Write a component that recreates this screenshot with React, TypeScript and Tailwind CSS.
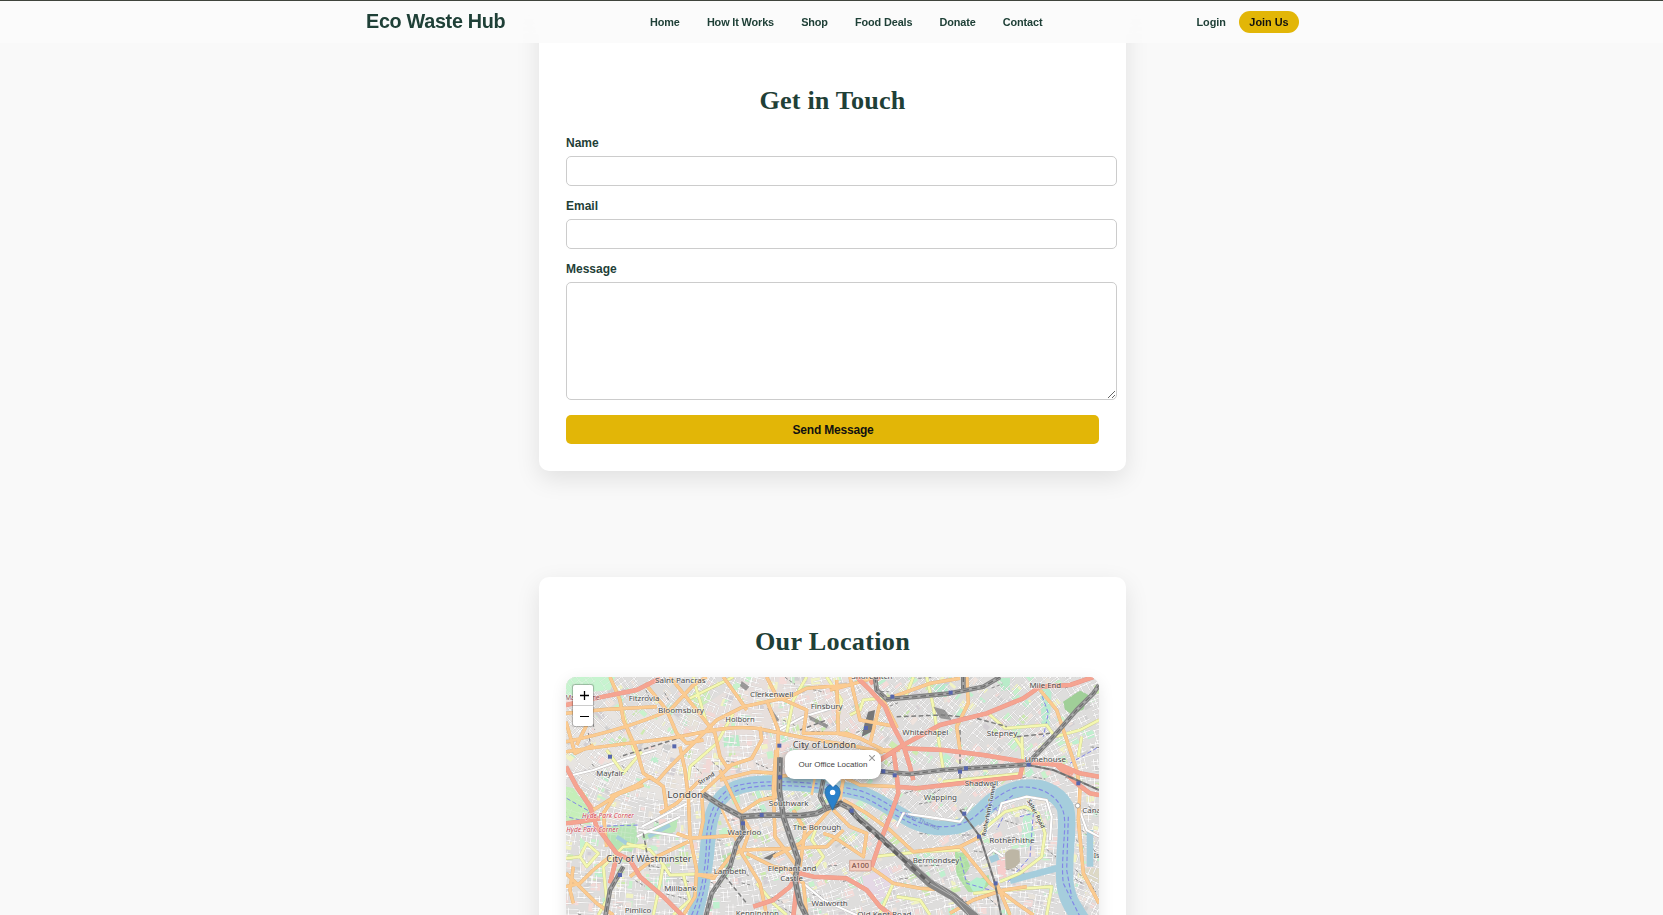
import React from "react";

const NAV = ["Home", "How It Works", "Shop", "Food Deals", "Donate", "Contact"];

function makeRandom(seed: number) {
  let s = seed;
  return () => {
    s = (s * 1664525 + 1013904223) % 4294967296;
    return s / 4294967296;
  };
}

const PATCH_COLORS = ["#c8f2cc", "#f2d9d6", "#e9e3da", "#cdebb0", "#f5dcd9", "#f1f3c4", "#d3cfd3", "#d0d0d0", "#efe3dd", "#bff0cf"];

function buildStreets() {
  const rnd = makeRandom(77);
  const patches: { d: string; fill: string }[] = [];
  let streets = "";
  let paths = "";
  for (let y = 0; y < 760; y += 44) {
    for (let x = 0; x < 1640; x += 44) {
      const a = Math.sin(x / 310 + 1.2) * 0.5 + Math.cos(y / 210 + x / 500) * 0.45;
      const cx = x + rnd() * 20;
      const cy = y + rnd() * 20;
      const c = Math.cos(a);
      const s = Math.sin(a);
      const p = (u: number, v: number) => `${(cx + u * c - v * s).toFixed(0)} ${(cy + u * s + v * c).toFixed(0)}`;
      for (let k = 0; k < 3; k++) {
        if (rnd() < 0.6) {
          const w = 7 + rnd() * 22;
          const h = 7 + rnd() * 20;
          const ox = rnd() * 34;
          const oy = rnd() * 34;
          patches.push({
            d: `M${p(ox, oy)}L${p(ox + w, oy)}L${p(ox + w, oy + h)}L${p(ox, oy + h)}Z`,
            fill: PATCH_COLORS[Math.floor(rnd() * PATCH_COLORS.length)],
          });
        }
      }
      for (let k = 0; k < 3; k++) {
        const o = k * 15 + rnd() * 6;
        if (k !== 1 || rnd() < 0.7) streets += `M${p(-4, o)}L${p(20 + rnd() * 28, o)}`;
        if (k < 2 || rnd() < 0.3) streets += `M${p(o, -3)}L${p(o, 16 + rnd() * 28)}`;
      }
      if (rnd() < 0.16) paths += `M${p(0, 8)}L${p(30, 14 + rnd() * 20)}`;
    }
  }
  return { patches, streets, paths };
}

const BASE = buildStreets();

const PARKS: [string, string][] = [
  ["M18 21H165L150 60L90 66L18 90Z", "#c6f3cf"],
  ["M18 350L40 355L95 430L60 455L18 465Z", "#c0efb8"],
  ["M18 350L60 400L85 462L18 462Z", "#cdf0b8"],
  ["M140 470L225 460L235 510L215 545L160 540L125 500Z", "#b6e3b5"],
  ["M240 490L355 440L345 485L250 510Z", "#b9e6b8"],
  ["M480 560L515 545L520 580L490 600Z", "#b9dfae"],
  ["M285 625L305 615L308 650L278 660Z", "#bff0cf"],
  ["M1510 95L1560 62L1585 75L1570 118L1535 135L1515 118Z", "#a0cf98"],
  ["M1185 545L1215 550L1230 590L1210 620L1235 640L1285 615L1290 640L1260 670L1225 665L1190 615Z", "#aedfa3"],
  ["M1390 435L1415 440L1425 500L1400 540L1385 500Z", "#c0efd2"],
  ["M1120 45L1165 42L1160 82L1122 80Z", "#b7eccd"],
  ["M385 70L445 62L455 90L405 120Z", "#cdeebb"],
  ["M490 198L535 195L540 228L492 232Z", "#b8ecc9"],
  ["M1440 40L1475 60L1468 175L1445 165Z", "#b9ecd0"],
  ["M1570 595L1617 595V640H1575Z", "#ddd9c5"],
  ["M375 135L410 130L415 165L385 172Z", "#e8e4da"],
  ["M905 620L990 590L1010 640L960 700L915 660Z", "#e5d9e6"],
  ["M1310 565L1335 560L1340 620L1315 630Z", "#f7cdcc"],
  ["M1320 25L1350 23L1350 60L1322 62Z", "#b8ecc9"],
];

const YELLOW = [
  "M180 90L200 170L225 250", "M140 240L190 310L245 245", "M385 330L390 290L470 220L520 130", "M200 520L270 540L310 585L330 615L410 612",
  "M18 565L60 560L80 520L115 550L80 590L60 560", "M115 735L140 690L130 590L190 530L260 525", "M280 735L300 640L310 580",
  "M380 90L440 60L520 21", "M440 160L410 60L400 21", "M680 190L700 90L740 21", "M800 21L845 90L830 160", "M1100 21L1120 110L1150 300",
  "M1285 130L1335 175L1460 165L1485 200L1560 180L1617 150", "M1385 200L1390 310L1150 335", "M1360 195L1390 240",
  "M1250 510L1280 470L1335 425L1395 410L1435 430L1455 490L1445 560L1380 610L1320 635", "M940 560L1080 545L1200 540",
  "M1000 640L960 730", "M1010 680L1080 690L1110 735", "M1240 670L1400 655L1475 650L1460 735", "M760 600L790 560L755 510L770 470",
  "M1060 21L1035 85", "M340 735L390 690L370 615", "M870 135L900 120L910 90L1000 80", "M590 640L640 700L680 735", "M1565 200L1555 260",
];

const ORANGE = [
  "M18 245C150 225 250 215 330 205C420 190 500 165 590 175C670 190 730 205 800 215C880 225 920 235 970 248",
  "M18 215C140 190 240 160 330 120L400 45L440 21", "M18 130L140 118L290 110", "M150 21L180 90L190 150L230 240L250 310L290 335L330 290L390 230L470 150L550 110L690 80L740 55L860 45",
  "M18 155L45 250L100 225", "M60 90L80 165L50 225", "M255 40L320 120L350 190L380 220L430 210", "M330 21L410 120L465 190L480 260L500 290L575 265L605 210L600 170",
  "M490 21L540 90L560 120", "M620 90L655 180L650 310L655 350", "M620 21L650 80L740 120L730 190L860 190L900 205",
  "M360 230L375 300L385 380L390 500L410 600L405 680L370 735", "M150 380L230 345L270 320L310 350L320 420",
  "M420 500L430 450L425 370L520 280", "M480 300L545 435L570 480L545 550L600 640L620 735", "M350 490L390 505L540 495",
  "M210 620L290 560L385 515", "M18 610L110 700L160 735", "M60 360L100 420L180 370L250 345", "M140 530L130 430L160 385",
  "M405 612L460 625L510 560L545 540L690 535L800 530L850 480", "M560 550L640 590L700 600", "M540 430L600 390L650 380",
  "M648 240L640 350L645 500L690 560L715 595", "M850 330L840 380L800 430L720 520L640 560", "M720 590L735 480L700 420",
  "M850 390L920 430L990 480L1060 545L1200 530L1260 500", "M820 420L870 470L920 490L910 560L820 500L790 490",
  "M930 590L1000 640L1080 655L1160 660", "M1200 530L1250 590L1290 640L1370 700L1420 735", "M1170 730L1240 690L1330 660L1400 650",
  "M1310 640L1350 735", "M690 600L730 640L740 735", "M1440 60L1490 120L1530 240L1550 300L1560 360L1555 450L1570 610L1617 700",
  "M810 60L850 50L950 21", "M970 90L1010 170L900 150L870 21", "M960 100L930 220L990 250", "M830 190L900 205L970 240L1020 240",
  "M1000 80L1110 40L1200 25", "M1220 21L1225 100L1190 170L1200 240", "M640 320L760 310L850 320L900 345L1010 350", "M480 330L580 305L650 310",
  "M18 650L60 640L100 600L150 560", "M40 700L30 660L40 590", "M420 330L350 400L300 430", "M830 30L835 190",
];

const RED = [
  "M18 105L130 80L230 60L300 25", "M18 290L50 350L90 410L110 470L170 550L210 570L240 620L310 680L370 740",
  "M18 460L60 455L120 445", "M170 560L150 640", "M890 21L930 60L975 110L1000 170L1030 225L1050 290L1060 330",
  "M960 270L1030 225L1140 165L1280 130L1390 85L1440 50L1530 45L1600 21", "M1030 235L1150 240L1270 255L1390 275L1500 285L1560 310L1617 320",
  "M1000 240L1010 310L1015 370L990 440L955 530L935 590", "M1010 350L1070 355L1200 340L1380 320L1390 275",
  "M720 610L760 620L860 625L920 660L960 710L1000 740", "M720 600L690 650L640 690L580 710", "M715 605L700 740", "M930 40L960 21",
  "M1490 285L1550 340L1590 370L1617 375", "M1500 285L1540 310",
];

const RAIL = [
  "M430 372L480 405L545 440L620 435L720 437L770 430L800 415L840 400L870 415L890 440L960 500L1040 575L1110 640L1180 680L1250 745",
  "M545 440L550 490L530 520L510 590L455 670L435 750", "M660 262L658 360L670 440L690 500L715 570L705 630L720 700L745 750",
  "M958 304L1050 312L1150 300L1260 293L1400 284", "M1400 284L1480 300L1550 330L1617 360",
  "M945 21L950 60L980 88L1070 80L1170 70L1210 62L1210 21", "M1210 62L1270 50L1320 21", "M1400 284L1480 200L1550 120L1600 70L1617 45",
  "M790 330L780 380L800 420", "M190 590L150 660L135 745", "M1200 420L1260 500L1305 640L1325 745",
];

const LANES =
  "M1250 510L1310 450L1325 400L1400 380L1460 390L1475 440L1470 510M1010 470L1030 430L1100 440L1200 455L1240 400M230 500L360 440M235 480L380 502M245 470L400 390M1265 570L1300 540L1330 560M655 180L730 140L830 110M730 640L790 690L900 740M1555 410L1580 480L1617 500M18 320L100 300L200 265L290 240";

const BRIDGES = "M545 550L480 405M385 502L470 502M648 300V380M765 320L755 375M850 320L842 390M1012 370L985 450M410 612L460 615";

const STATIONS = [
  [343, 229], [150, 260], [658, 227], [660, 322], [605, 435], [549, 460], [997, 80], [1172, 68], [1004, 316], [1200, 305],
  [1218, 295], [1406, 284], [1555, 340], [1213, 431], [1257, 500], [1307, 640], [875, 422], [180, 615], [918, 174], [970, 304],
];

const LABELS: [string, number, number, number, number][] = [
  ["Saint Pancras", 361, 38, 152, 23], ["Fitzrovia", 252, 93, 92, 23], ["Bloomsbury", 363, 129, 138, 23], ["Clerkenwell", 635, 80, 130, 23],
  ["Holborn", 540, 157, 88, 23], ["Finsbury", 800, 116, 96, 23], ["City of London", 793, 233, 190, 27], ["Mayfair", 150, 317, 82, 23],
  ["London", 376, 385, 108, 29], ["Southwark", 686, 408, 119, 23], ["Waterloo", 553, 495, 101, 23], ["The Borough", 771, 481, 145, 23],
  ["City of Westminster", 267, 575, 256, 27], ["Lambeth", 510, 613, 98, 23], ["Elephant and", 696, 602, 146, 23], ["Castle", 695, 633, 68, 23],
  ["Millbank", 361, 662, 96, 23], ["Pimlico", 234, 728, 80, 23], ["Kennington", 592, 738, 130, 23], ["Walworth", 809, 708, 109, 23],
  ["Whitechapel", 1096, 196, 138, 23], ["Stepney", 1326, 197, 92, 23], ["Mile End", 1456, 54, 95, 23], ["Limehouse", 1456, 275, 124, 23],
  ["Shadwell", 1264, 348, 100, 23], ["Wapping", 1141, 390, 100, 23], ["Rotherhithe", 1356, 518, 136, 23], ["Bermondsey", 1128, 580, 140, 23],
  ["Old Kent Road", 973, 740, 162, 23], ["Shoreditch", 936, 26, 124, 23], ["Canary", 1606, 430, 78, 23], ["Isle", 1618, 563, 34, 23],
];

function LondonMap() {
  return (
    <svg className="block h-full w-full" viewBox="18 21 1599 720" preserveAspectRatio="xMinYMin slice" fill="none" strokeLinejoin="round">
      <rect x="0" y="0" width="1640" height="760" fill="#dedddc" />
      <path d="M560 21H960V320H500L440 380L340 400L290 200Z" fill="#ebe0dc" opacity=".65" />
      <path d="M18 120H330L430 260L370 400L100 360L18 280Z" fill="#eceae4" opacity=".6" />
      {BASE.patches.map((p, i) => (
        <path key={i} d={p.d} fill={p.fill} />
      ))}
      {PARKS.map(([d, f]) => (
        <path key={d} d={d} fill={f} />
      ))}
      <path d={BASE.streets} stroke="#c6c3c3" strokeWidth="4.4" opacity=".8" />
      <path d={BASE.streets} stroke="#ffffff" strokeWidth="3" opacity=".9" />
      <path d={BASE.paths} stroke="#8d8d8d" strokeWidth="3" strokeDasharray="10 6" />
      <path d="M1510 95L1560 62L1585 75L1570 118L1535 135L1515 118Z" fill="#a0cf98" />
      <path d="M140 470L225 460L235 510L215 545L160 540L125 500Z" fill="#b6e3b5" opacity=".8" />
      <path d="M240 490L355 440L345 485L250 510Z" fill="#b9e6b8" />
      <path d="M18 350L40 355L95 430L60 455L18 465Z" fill="#c4efb9" opacity=".85" />
      <path d="M18 21H165L150 60L90 66L18 90Z" fill="#c6f3cf" opacity=".7" />
      <path d="M1185 545L1215 550L1230 590L1210 620L1235 640L1285 615L1290 640L1260 670L1225 665L1190 615Z" fill="#aedfa3" opacity=".85" />
      <path d="M1225 640L1250 622L1280 630L1270 660L1240 665Z" fill="#b4efcf" />
      <path d="M1335 550Q1350 530 1378 542L1380 575Q1365 600 1337 598Z" fill="#bdb6a5" />
      <path d="M60 500L80 520L60 540Z" fill="#c8f2cc" />
      <g stroke="#a5cddc">
        <path strokeWidth="44" d="M402 750C425 670 438 600 445 500C450 430 470 385 510 362C560 335 620 336 700 340C760 345 830 350 900 368C960 388 1000 425 1060 455C1120 482 1200 484 1250 440C1290 400 1320 372 1370 356" />
        <path strokeWidth="52" d="M1240 450C1290 395 1320 372 1375 358C1440 345 1490 365 1515 410C1530 460 1508 560 1515 640C1520 690 1545 720 1570 760" />
        <path strokeWidth="20" d="M1350 632L1490 595M1290 570L1315 560M1590 480V590" />
        <path strokeWidth="12" d="M170 500L215 530M265 500L330 465" />
      </g>
      <g stroke="#8287e6" strokeWidth="3.5" strokeDasharray="13 7">
        <path d="M395 735C425 670 438 600 440 500C445 430 470 375 520 350C570 335 620 335 700 336C760 340 830 345 900 362C960 382 1000 415 1060 450C1120 478 1200 480 1250 435C1290 400 1320 367 1370 352C1440 345 1490 375 1508 420C1525 460 1500 560 1510 640L1560 740" />
        <path d="M410 735C432 670 443 620 450 510C455 440 480 385 530 362C580 345 650 345 700 348C780 350 860 370 910 382C960 402 1010 445 1080 470M1300 420L1360 375M1525 440L1520 600L1535 680" />
        <path d="M20 385L90 425L60 450L20 440M80 470L240 465M1380 440L1420 430L1410 560L1340 640M1440 60L1465 130L1450 200M1530 280L1617 230M1200 560L1220 640L1290 660M1290 400L1330 440L1310 480" strokeWidth="3" />
      </g>
      <path d={LANES} stroke="#b9b6b6" strokeWidth="9" />
      <path d={LANES} stroke="#fff" strokeWidth="6.500" />
      <path d={YELLOW.join("")} stroke="#c9cb8b" strokeWidth="9.500" />
      <path d={YELLOW.join("")} stroke="#f4f8b1" strokeWidth="7.500" />
      <g fill="#777">
        <path d="M545 33L568 50L558 62L540 48Z" opacity=".7" />
        <path d="M630 110L658 150L645 158L622 115ZM745 135L805 165L800 175L750 150ZM1120 110L1155 120L1175 150L1140 145Z" opacity=".7" />
        <path d="M925 125L945 120L935 185L905 200L915 155Z" />
        <path d="M610 565L650 545L630 570Z" />
      </g>
      <path d="M1010 140L1150 135L1250 145L1340 170M1370 200L1470 190M720 180L800 150M480 600L560 700M250 490L270 600M730 220V300M370 200L180 260M1200 180V340" stroke="#7d7d7d" strokeWidth="4.500" strokeDasharray="14 8" />
      <path d={ORANGE.join("")} stroke="#e3b27a" strokeWidth="10.500" />
      <path d={ORANGE.join("")} stroke="#fbcb91" strokeWidth="8.500" />
      <path d={BRIDGES} stroke="#fbcb91" strokeWidth="7" />
      <path d={RED.join("")} stroke="#e6958a" strokeWidth="13.500" />
      <path d={RED.join("")} stroke="#f5a491" strokeWidth="11.500" />
      {RAIL.map((d, i) => (
        <g key={d}>
          <path d={d} stroke="#828282" strokeWidth={i === 4 || i === 10 ? 6 : i === 0 || i === 2 ? 17 : 14} />
          <path d={d} stroke="#aaaaaa" strokeWidth={i === 4 || i === 10 ? 1 : 7} />
          <path d={d} stroke="#6d6d6d" strokeWidth="4" strokeDasharray="17 9" />
        </g>
      ))}
      <path d="M1040 575L1110 640L1180 680L1250 745" stroke="#858585" strokeWidth="24" />
      <path d="M1040 575L1110 640L1180 680L1235 745M1060 580L1130 640L1260 735" stroke="#bdbdbd" strokeWidth="2.500" />
      <path d="M868 420L890 445L1110 640" stroke="#606060" strokeWidth="9" strokeDasharray="19 17" />
      <g fill="#5767ad">
        {STATIONS.map(([x, y]) => (
          <rect key={`${x}-${y}`} x={x - 6} y={y - 6} width="12" height="12" />
        ))}
      </g>
      <circle cx="1553" cy="407" r="7" fill="#fff" stroke="#888" strokeWidth="2" />
      <g fontFamily="'Noto Sans', 'Open Sans', sans-serif" textAnchor="middle" fill="#4c4c4c" stroke="#ffffff" strokeOpacity=".55" strokeWidth="4" style={{ paintOrder: "stroke" }}>
        {LABELS.map(([t, x, y, w, s]) => (
          <text key={t} x={x} y={y} fontSize={s} textLength={w} lengthAdjust="spacingAndGlyphs">
            {t}
          </text>
        ))}
        <g fill="#d4485a" fontStyle="italic" fontSize="20">
          <text x="144" y="444" textLength="156">Hyde Park Corner</text>
          <text x="97" y="485" textLength="156">Hyde Park Corner</text>
        </g>
        <text x="67" y="89" textLength="104" fontSize="21" fill="#a05560">Marylebone</text>
        <text fontSize="18" fill="#7386c6" strokeWidth="0" transform="translate(1083 459) rotate(22)">River Thames</text>
        <text fontSize="17" fontWeight="600" transform="translate(442 330) rotate(-32)">Strand</text>
        <text fontSize="17" fontWeight="600" transform="translate(1423 434) rotate(62)">Salter Road</text>
        <text fontSize="17" fontWeight="600" transform="translate(1292 420) rotate(-79)">Rotherhithe Tunnel</text>
      </g>
      <rect x="869" y="571" width="64" height="32" fill="#f3cdbf" stroke="#c98f7e" strokeWidth="2" />
      <text x="901" y="595" fontSize="22" textAnchor="middle" fontFamily="'Noto Sans', sans-serif" fill="#6a3a30">A100</text>
    </svg>
  );
}

function Marker() {
  return (
    <svg className="absolute left-[256px] top-[106px] h-[28px] w-[22px]" viewBox="0 0 22 28">
      <path d="M10 27L19 16L21 19L13 27Z" fill="#000" opacity=".25" />
      <path d="M3 9a7.600 7.600 0 0 1 15.200 0c0 3-1.300 5.200-2.800 8.400L10.600 27.300L5.800 17.400C4.300 14.200 3 12 3 9z" fill="#2a81cb" stroke="#2e6c97" strokeWidth=".8" />
      <circle cx="10.600" cy="9.400" r="2.700" fill="#fff" />
    </svg>
  );
}

function Field({ label, multiline = false }: { label: string; multiline?: boolean }) {
  const box = "block w-[551px] rounded-[5px] border border-[#ccc] bg-white outline-none";
  return (
    <div className="flex flex-col">
      <label className="mb-[6px] text-[12px] font-bold leading-[14px]">{label}</label>
      {multiline ? <textarea className={`${box} h-[118px] resize`} /> : <input className={`${box} h-[30px]`} />}
    </div>
  );
}

export default function App() {
  return (
    <div className="h-[915px] overflow-hidden bg-[#f9f9f9] pl-[2px] font-['Liberation_Sans',Arial,sans-serif] text-[#1f4037]">
      <header className="fixed inset-x-0 top-0 z-10 h-[43px] border-t border-[#3f443c] bg-[#fbfbfb]/90 pl-[2px] backdrop-blur-[8px]">
        <div className="mx-auto flex h-[41px] w-[933px] items-center">
          <div className="w-[284px] text-[19.8px] font-bold leading-none tracking-[-0.3px]">Eco Waste Hub</div>
          <nav className="flex items-center gap-[27.2px] pt-[2px] text-[10.88px] font-bold tracking-[-0.13px]">
            {NAV.map((n) => (
              <a key={n} className="whitespace-nowrap">{n}</a>
            ))}
          </nav>
          <div className="ml-auto flex items-center gap-[13px] text-[10.88px] font-bold">
            <a className="pt-[2px]">Login</a>
            <button className="h-[22px] w-[60px] rounded-full bg-[#e2b607] pt-[1px] text-[#111]">Join Us</button>
          </div>
        </div>
      </header>

      <main className="flex flex-col items-center gap-[106px]">
        <section className="h-[471px] w-[587px] shrink-0 rounded-b-[10px] bg-white px-[27px] pt-[86px] shadow-[0_8px_24px_rgba(0,0,0,0.1)]">
          <h2 className="text-center font-['Liberation_Serif','Times_New_Roman',serif] text-[26.2px] font-bold leading-[30px] tracking-[0.16px]">Get in Touch</h2>
          <form className="mt-[20px] flex flex-col gap-[13px]">
            <Field label="Name" />
            <Field label="Email" />
            <Field label="Message" multiline />
            <button type="button" className="mt-[2px] h-[29px] w-full rounded-[5px] bg-[#e2b607] pl-[1px] pt-[1px] text-[12px] font-bold tracking-[-0.2px] text-[#111]">
              Send Message
            </button>
          </form>
        </section>

        <section className="h-[420px] w-[587px] shrink-0 rounded-[10px] bg-white px-[27px] pt-[50px] shadow-[0_8px_24px_rgba(0,0,0,0.1)]">
          <h2 className="text-center font-['Liberation_Serif','Times_New_Roman',serif] text-[26.2px] font-bold leading-[30px] tracking-[0.3px]">Our Location</h2>
          <div className="relative mt-[20px] h-[320px] w-[533px] overflow-hidden rounded-t-[10px] shadow-[0_4px_16px_rgba(0,0,0,0.1)]">
            <div className="h-[240px] w-[533px]">
              <LondonMap />
            </div>
            <div className="absolute left-[7px] top-[8px] flex w-[20px] flex-col overflow-hidden rounded-[2px] bg-white shadow-[0_0_1px_1px_rgba(0,0,0,0.25)]">
              <button className="flex h-[21px] items-center justify-center border-b border-[#ccc] pl-[2px]">
                <svg className="h-[9px] w-[9px]" viewBox="0 0 9 9"><path d="M0 4.500H9M4.500 0V9" stroke="#000" strokeWidth="1.300" /></svg>
              </button>
              <button className="flex h-[20px] items-center justify-center pl-[2px]">
                <svg className="h-[9px] w-[9px]" viewBox="0 0 9 9"><path d="M0 4.500H9" stroke="#000" strokeWidth="1.200" /></svg>
              </button>
            </div>
            <Marker />
            <div className="absolute left-[219px] top-[73px] flex h-[29px] w-[96px] items-center justify-center rounded-[9px] bg-white text-[8px] text-[#444] shadow-[0_2px_8px_rgba(0,0,0,0.4)]">
              Our Office Location
              <svg className="absolute right-[6px] top-[5px] h-[6px] w-[6px]" viewBox="0 0 6 6"><path d="M0 0L6 6M6 0L0 6" stroke="#999" strokeWidth="1.100" /></svg>
              <svg className="absolute left-[39px] top-[28px] h-[9px] w-[18px]" viewBox="0 0 18 9"><path d="M0 0H18L9 9Z" fill="#fff" /></svg>
            </div>
          </div>
        </section>
      </main>
    </div>
  );
}
